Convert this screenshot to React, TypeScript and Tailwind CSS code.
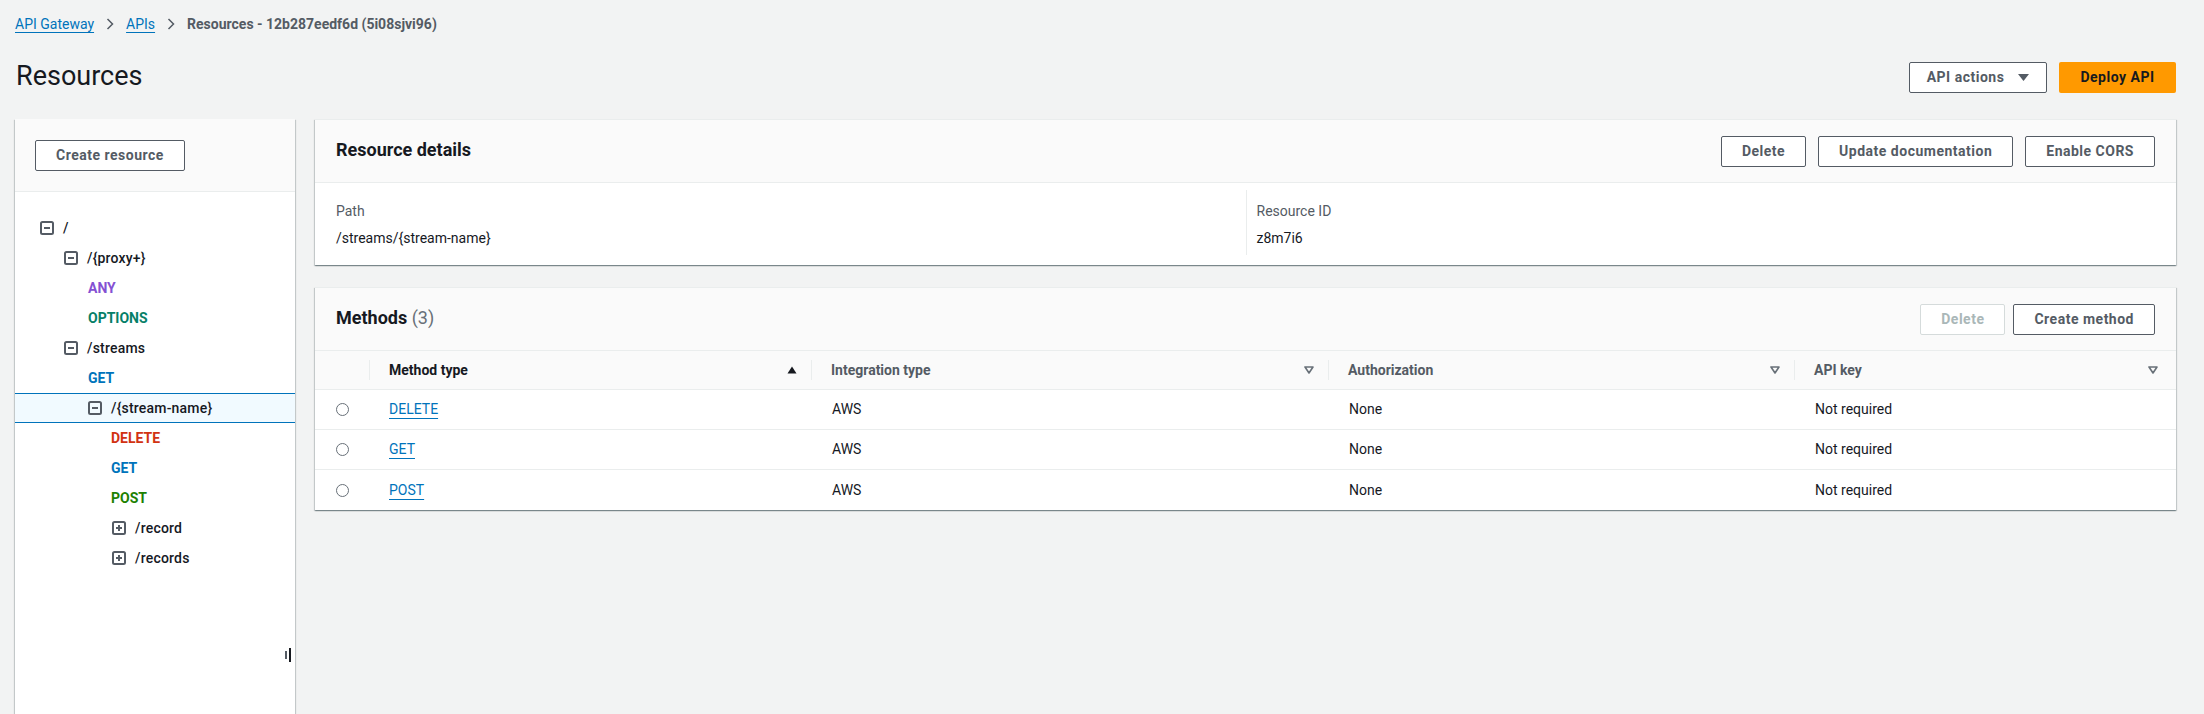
import React from "react";

type TreeItem =
  | { kind: "resource"; depth: number; label: string; open: boolean; selected?: boolean }
  | { kind: "method"; depth: number; label: string; color: string };

const tree: TreeItem[] = [
  { kind: "resource", depth: 0, label: "/", open: true },
  { kind: "resource", depth: 1, label: "/{proxy+}", open: true },
  { kind: "method", depth: 1, label: "ANY", color: "text-[#8451d3]" },
  { kind: "method", depth: 1, label: "OPTIONS", color: "text-[#067f68]" },
  { kind: "resource", depth: 1, label: "/streams", open: true },
  { kind: "method", depth: 1, label: "GET", color: "text-[#0073bb]" },
  { kind: "resource", depth: 2, label: "/{stream-name}", open: true, selected: true },
  { kind: "method", depth: 2, label: "DELETE", color: "text-[#d13212]" },
  { kind: "method", depth: 2, label: "GET", color: "text-[#0073bb]" },
  { kind: "method", depth: 2, label: "POST", color: "text-[#1d8102]" },
  { kind: "resource", depth: 3, label: "/record", open: false },
  { kind: "resource", depth: 3, label: "/records", open: false },
];

const resourceIndent: Record<number, string> = {
  0: "pl-[25px]",
  1: "pl-[49px]",
  2: "pl-[73px]",
  3: "pl-[97px]",
};

const methodIndent: Record<number, string> = {
  1: "pl-[73px]",
  2: "pl-[96px]",
};

const methods = ["DELETE", "GET", "POST"];

const shadow =
  "shadow-[0_1px_1px_0_rgba(0,28,36,0.3),1px_1px_1px_0_rgba(0,28,36,0.15),-1px_1px_1px_0_rgba(0,28,36,0.15)]";

function Button({ children, disabled }: { children: React.ReactNode; disabled?: boolean }) {
  return (
    <button
      className={
        "h-[31px] px-[20px] rounded-[2px] border text-[14px] font-bold tracking-[0.5px] bg-white " +
        (disabled ? "border-[#d5dbdb] text-[#aab7b8]" : "border-[#545b64] text-[#545b64]")
      }
    >
      {children}
    </button>
  );
}

function TreeToggle({ open }: { open: boolean }) {
  return (
    <svg width="14" height="14" viewBox="0 0 14 14" className="shrink-0">
      <rect x="1" y="1" width="12" height="12" rx="1.5" fill="none" stroke="#545b64" strokeWidth="2" />
      <path d="M4 7h6" stroke="#545b64" strokeWidth="2" />
      {!open && <path d="M7 4v6" stroke="#545b64" strokeWidth="2" />}
    </svg>
  );
}

function Chevron() {
  return (
    <svg width="8" height="12" viewBox="0 0 8 12" className="mx-[12px]">
      <path d="M1.5 1l5 5-5 5" fill="none" stroke="#545b64" strokeWidth="1.5" />
    </svg>
  );
}

function SortDown() {
  return (
    <svg width="10" height="8" viewBox="0 0 10 8">
      <path d="M1 1h8L5 7z" fill="none" stroke="#687078" strokeWidth="1.6" strokeLinejoin="round" />
    </svg>
  );
}

function SortUp() {
  return (
    <svg width="10" height="8" viewBox="0 0 10 8">
      <path d="M0.5 7.5h9L5 0.5z" fill="#16191f" />
    </svg>
  );
}

function HeaderCell({
  label,
  sorted,
  divider = true,
  last,
}: {
  label: string;
  sorted?: boolean;
  divider?: boolean;
  last?: boolean;
}) {
  return (
    <div className="flex items-center h-full">
      {divider && <span className="h-[20px] w-px bg-[#eaeded]" />}
      <span
        className={
          "flex-1 pl-[19px] font-bold " + (sorted ? "text-[#16191f]" : "text-[#545b64]")
        }
      >
        {label}
      </span>
      <span className={last ? "pr-[18px]" : "pr-[14px]"}>{sorted ? <SortUp /> : <SortDown />}</span>
    </div>
  );
}

export default function App() {
  return (
    <div className="min-h-screen bg-[#f2f3f3] pl-[15px] pr-[28px] text-[14px] text-[#16191f] font-['Roboto','Open_Sans',sans-serif] overflow-hidden">
      <nav className="h-[48px] flex items-center">
        <a className="text-[#0073bb] underline underline-offset-[3px]">API Gateway</a>
        <Chevron />
        <a className="text-[#0073bb] underline underline-offset-[3px]">APIs</a>
        <Chevron />
        <span className="font-bold text-[#545b64]">Resources - 12b287eedf6d (5i08sjvi96)</span>
      </nav>

      <div className="flex items-end justify-between pt-[10px] pb-[25px]">
        <h1 className="text-[27px] leading-[36px] font-normal pl-[1px]">Resources</h1>
        <div className="flex gap-[12px] mb-[1px]">
          <button className="h-[31px] w-[138px] rounded-[2px] border border-[#545b64] bg-white text-[#545b64] font-bold tracking-[0.5px] flex items-center justify-center gap-[14px]">
            API actions
            <svg width="11" height="8" viewBox="0 0 11 8">
              <path d="M0 0h11L5.5 7z" fill="#545b64" />
            </svg>
          </button>
          <button className="h-[31px] w-[117px] rounded-[2px] bg-[#ff9900] text-[#16191f] font-bold tracking-[0.5px]">
            Deploy API
          </button>
        </div>
      </div>

      <div className="flex gap-[20px] items-start">
        <aside className={"relative w-[280px] shrink-0 min-h-[620px] bg-white " + shadow}>
          <div className="h-[73px] bg-[#fafafa] border-b border-[#eaeded] px-[20px] flex items-center">
            <Button>Create resource</Button>
          </div>
          <div className="pt-[21px]">
            {tree.map((item, i) =>
              item.kind === "resource" ? (
                <div
                  key={i}
                  className={
                    "h-[30px] flex items-center gap-[9px] " +
                    resourceIndent[item.depth] +
                    (item.selected ? " bg-[#f1faff] border-y border-[#0073bb]" : "")
                  }
                >
                  <TreeToggle open={item.open} />
                  <span className="text-[#16191f] font-medium tracking-[0.2px]">{item.label}</span>
                </div>
              ) : (
                <div
                  key={i}
                  className={"h-[30px] flex items-center font-bold " + methodIndent[item.depth] + " " + item.color}
                >
                  {item.label}
                </div>
              )
            )}
          </div>
          <div className="absolute left-[270px] top-[529px] flex items-center gap-[2px]">
            <span className="w-[2px] h-[8px] bg-[#545b64]" />
            <span className="w-[2px] h-[14px] bg-[#16191f]" />
          </div>
        </aside>

        <main className="flex-1 flex flex-col gap-[22px]">
          <section className={"bg-white border-t border-[#eaeded] " + shadow}>
            <div className="h-[63px] bg-[#fafafa] border-b border-[#eaeded] px-[21px] flex items-center justify-between">
              <h2 className="text-[18px] font-bold -mt-[3px]">Resource details</h2>
              <div className="flex gap-[12px]">
                <Button>Delete</Button>
                <Button>Update documentation</Button>
                <Button>Enable CORS</Button>
              </div>
            </div>
            <div className="grid grid-cols-2 px-[21px] pt-[7px] pb-[10px]">
              <div className="pt-[11px] pb-[7px]">
                <div className="leading-[20px] text-[#545b64]">Path</div>
                <div className="leading-[20px] mt-[7px]">/streams/{"{stream-name}"}</div>
              </div>
              <div className="pt-[11px] pb-[7px] pl-[10px] border-l border-[#eaeded]">
                <div className="leading-[20px] text-[#545b64]">Resource ID</div>
                <div className="leading-[20px] mt-[7px]">z8m7i6</div>
              </div>
            </div>
          </section>

          <section className={"bg-white border-t border-[#eaeded] " + shadow}>
            <div className="h-[63px] bg-[#fafafa] border-b border-[#eaeded] px-[21px] flex items-center justify-between">
              <h2 className="text-[18px] font-bold -mt-[3px]">
                Methods <span className="font-normal text-[#687078]">(3)</span>
              </h2>
              <div className="flex gap-[8px]">
                <Button disabled>Delete</Button>
                <Button>Create method</Button>
              </div>
            </div>
            <div className="grid grid-cols-[54px_442px_517px_466px_1fr] h-[39px] bg-[#fafafa] border-b border-[#eaeded]">
              <div />
              <HeaderCell label="Method type" sorted />
              <HeaderCell label="Integration type" />
              <HeaderCell label="Authorization" />
              <HeaderCell label="API key" last />
            </div>
            {methods.map((m, i) => (
              <div
                key={m}
                className={
                  "grid grid-cols-[54px_442px_517px_466px_1fr] h-[40px] items-center " +
                  (i < methods.length - 1 ? "border-b border-[#eaeded]" : "")
                }
              >
                <div className="flex justify-center">
                  <span className="w-[13px] h-[13px] rounded-full border border-[#687078]" />
                </div>
                <div className="pl-[20px]">
                  <a className="text-[#0073bb] underline underline-offset-[4px]">{m}</a>
                </div>
                <div className="pl-[21px]">AWS</div>
                <div className="pl-[21px]">None</div>
                <div className="pl-[21px]">Not required</div>
              </div>
            ))}
          </section>
        </main>
      </div>
    </div>
  );
}
